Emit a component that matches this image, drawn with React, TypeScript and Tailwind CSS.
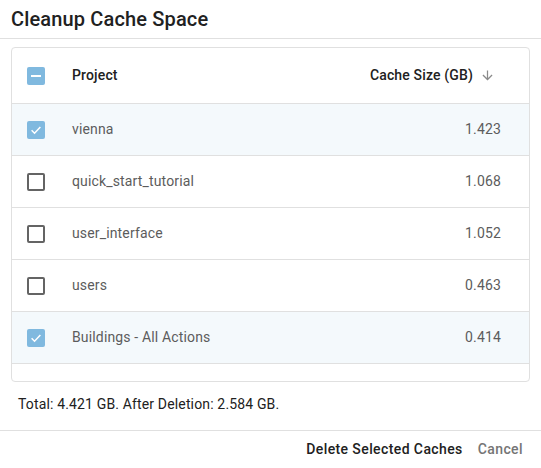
import { useState } from "react";

type Row = { name: string; size: string; checked: boolean };

const initialRows: Row[] = [
    { name: "vienna", size: "1.423", checked: true },
    { name: "quick_start_tutorial", size: "1.068", checked: false },
    { name: "user_interface", size: "1.052", checked: false },
    { name: "users", size: "0.463", checked: false },
    { name: "Buildings - All Actions", size: "0.414", checked: true },
];

const Box = ({ state }: { state: "on" | "off" | "some" }) => {
    if (state === "off") {
        return <span className="block w-[18px] h-[18px] rounded-[2px] border-2 border-[#646464] bg-white" />;
    }
    return (
        <span className="flex items-center justify-center w-[18px] h-[18px] rounded-[2px] bg-[#80b9df]">
            {state === "on" ? (
                <svg width="14" height="14" viewBox="0 0 24 24" fill="none">
                    <path d="M4.5 12.5l5 5 10-10.5" stroke="white" strokeWidth="2.6" />
                </svg>
            ) : (
                <span className="block w-[10px] h-[2px] bg-white" />
            )}
        </span>
    );
};

const App = () => {
    const [rows, setRows] = useState(initialRows);

    const all = rows.every((r) => r.checked);
    const some = rows.some((r) => r.checked);

    const toggle = (i: number) =>
        setRows(rows.map((r, j) => (j === i ? { ...r, checked: !r.checked } : r)));

    return (
        <div className="w-[541px] h-[468px] bg-white font-['Roboto',sans-serif] text-[#212121]">
            <div className="h-[39px] border-b border-[#e0e0e0] pl-[11px] pt-[7px]">
                <h1 className="text-[20px] font-medium leading-[24px] tracking-[0.15px]">Cleanup Cache Space</h1>
            </div>

            <div className="px-[11px] pt-[8px]">
                <div className="h-[335px] overflow-hidden rounded-[4px] border border-[#e0e0e0]">
                    <div className="flex items-center h-[56px] border-b border-[#e0e0e0] text-[14px] font-medium tracking-[0.15px]">
                        <button
                            className="pl-[15px] pr-[27px]"
                            onClick={() => setRows(rows.map((r) => ({ ...r, checked: !all })))}
                        >
                            <Box state={all ? "on" : some ? "some" : "off"} />
                        </button>
                        <span className="flex-1">Project</span>
                        <span className="flex items-center gap-[7px] pr-[34px]">
                            Cache Size (GB)
                            <svg width="15" height="15" viewBox="0 0 24 24" fill="#8a8a8a">
                                <path d="M20 12l-1.41-1.41L13 16.17V4h-2v12.17l-5.58-5.59L4 12l8 8 8-8z" />
                            </svg>
                        </span>
                    </div>

                    {rows.map((r, i) => (
                        <div
                            key={r.name}
                            className={`flex items-center h-[52px] border-b border-[#e0e0e0] text-[14px] tracking-[0.15px] text-[#5c5c5c] ${
                                r.checked ? "bg-[#f4f9fc]" : "bg-white"
                            }`}
                        >
                            <button className="pl-[15px] pr-[27px]" onClick={() => toggle(i)}>
                                <Box state={r.checked ? "on" : "off"} />
                            </button>
                            <span className="flex-1">{r.name}</span>
                            <span className="pr-[28px]">{r.size}</span>
                        </div>
                    ))}
                </div>
            </div>

            <p className="h-[48px] pl-[18px] pt-[12px] text-[14px] leading-[20px] tracking-[0.15px]">
                Total: 4.421 GB. After Deletion: 2.584 GB.
            </p>

            <div className="flex justify-end items-center gap-[15px] h-[38px] border-t border-[#e0e0e0] pr-[18px] text-[14px] font-medium tracking-[0.4px]">
                <button className="text-[#212121]">Delete Selected Caches</button>
                <button className="text-[#757575]">Cancel</button>
            </div>
        </div>
    );
};

export default App;
